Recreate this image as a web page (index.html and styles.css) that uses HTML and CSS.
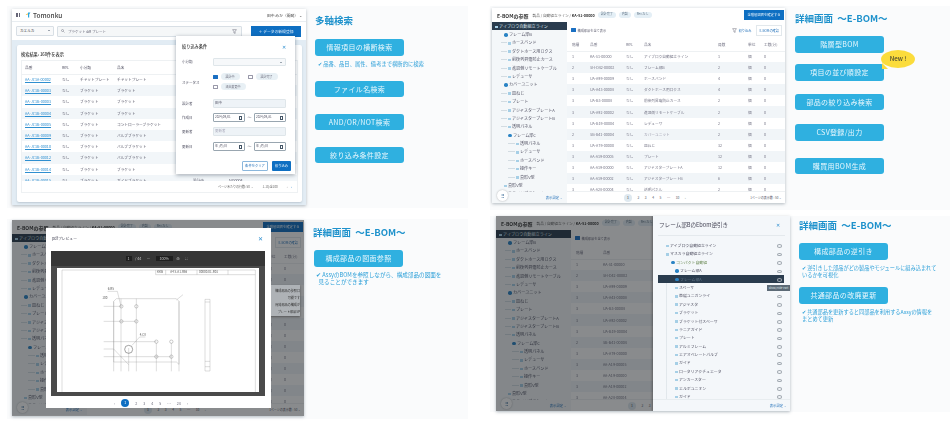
FILE: index.html
```html
<!DOCTYPE html>
<html lang="ja">
<head>
<meta charset="utf-8">
<title>Tomonku</title>
<link rel="stylesheet" href="styles.css">
</head>
<body>
<div class="column col-left">
  <section class="slide s1">
    <div class="shot">
      <header class="app-head">
        <span class="menu-dots"></span>
        <svg class="logo" viewBox="0 0 10 10"><path d="M1 4l4-2-1 3z" fill="#f0b429"/><path d="M5 1h4L7 4v5H5z" fill="#2aa7df"/></svg>
        <span class="brand">Tomonku</span>
        <span class="user">田中 みか（開発） ⌄</span>
      </header>
      <div class="toolbar">
        <span class="select">カエルカ<i class="caret"></i></span>
        <span class="search"><svg class="mag" viewBox="0 0 8 8"><circle cx="3" cy="3" r="2" fill="none" stroke="#667" stroke-width=".9"/><path d="M4.6 4.6L7 7" stroke="#667" stroke-width=".9"/></svg>プラケット ΦR プレート<svg class="funnel" viewBox="0 0 8 8"><path d="M1 1h6L5 4v3l-2-.8V4z" fill="none" stroke="#556" stroke-width=".7"/></svg></span>
        <span class="new-btn">＋ データの新規登録</span>
      </div>
      <div class="stage">
        <div class="card">
          <h2 class="result">検索結果: 160件を表示</h2>
          <div class="list-box">
            <div class="list-clip">
              <table class="list">
                <tr class="lh"><th class="l1">品番</th><th class="l2">Rev.</th><th class="l3">小分類</th><th class="l4">品名</th><th class="l5">ステータス</th><th>設計番号</th></tr>
                <tr><td class="lnk">AA-JC1A-00002</td><td>なし</td><td>チャットプレート</td><td>チャットプレート</td><td>設計中</td><td>NO0001</td></tr>
                <tr><td class="lnk">AA-JC1B-00003</td><td>なし</td><td>ブラケット</td><td>ブラケット</td><td>設計中</td><td>NO0001</td></tr>
                <tr><td class="lnk">AA-JC1B-00003</td><td>なし</td><td>ブラケット</td><td>ブラケット</td><td>設計中</td><td>NO0002</td></tr>
                <tr><td class="lnk">AA-JC1B-00004</td><td>なし</td><td>ブラケット</td><td>ブラケット</td><td>設計中</td><td>NO0002</td></tr>
                <tr><td class="lnk">AA-JC1B-00005</td><td>なし</td><td>ブラケット</td><td>コントローラーブラケット</td><td>設計中</td><td>NO0003</td></tr>
                <tr><td class="lnk">AA-JC1B-00009</td><td>なし</td><td>ブラケット</td><td>バルブブラケット</td><td>設計中</td><td>NO0003</td></tr>
                <tr><td class="lnk">AA-JC1B-00010</td><td>なし</td><td>ブラケット</td><td>バルブブラケット</td><td>設計中</td><td>NO0003</td></tr>
                <tr><td class="lnk">AA-JC1B-00012</td><td>なし</td><td>ブラケット</td><td>バルブブラケット</td><td>設計中</td><td>NO0004</td></tr>
                <tr><td class="lnk">AA-JC1B-00014</td><td>なし</td><td>ブラケット</td><td>ブラケット</td><td>設計中</td><td>NO0004</td></tr>
                <tr><td class="lnk">AA-JC1B-00015</td><td>なし</td><td>ブラケット</td><td>ガイドブラケット</td><td>設計中</td><td>NO0004</td></tr>
              </table>
            </div>
            <div class="list-foot"><span>ページあたりの行数: 50 ⌄</span><span class="range">1-10/全100</span><span class="pager">‹ &nbsp;&nbsp;&nbsp; <b>›</b></span></div>
          </div>
        </div>
      </div>
      <div class="filter-modal">
        <div class="fm-head"><b>絞り込み条件</b><span class="close">✕</span></div>
        <div class="fm-row r-sel"><label>小分類</label><span class="field sel"><i class="caret"></i></span></div>
        <div class="fm-row r-status"><label>ステータス</label>
          <div class="checks">
            <span class="chk on"></span><span class="chip">設計中</span><span class="chk"></span><span class="chip">設計完了</span>
            <span class="chk"></span><span class="chip">流出変更中</span>
          </div>
        </div>
        <div class="fm-row"><label>設計者</label><span class="field tint">田中</span></div>
        <div class="fm-row"><label>作成日</label><span class="date">2024/09/01<i></i></span><span class="tilde">〜</span><span class="date">2024/09/31<i></i></span></div>
        <div class="fm-row"><label>更新者</label><span class="field tint ph">更新者</span></div>
        <div class="fm-row"><label>更新日</label><span class="date">年 /月/日<i></i></span><span class="tilde">〜</span><span class="date">年 /月/日<i></i></span></div>
        <div class="fm-foot"><span class="btn-clear">条件をクリア</span><span class="btn-go">絞り込み</span></div>
      </div>
    </div>
    <aside class="side side1">
      <h1>多軸検索</h1>
      <div class="pill">情報項目の横断検索</div>
      <p class="note">✔ 品番、品目、属性、備考まで横断的に検索</p>
      <div class="pill after-note">ファイル名検索</div>
      <div class="pill gap17">AND/OR/NOT検索</div>
      <div class="pill gap17">絞り込み条件設定</div>
    </aside>
  </section>

  <section class="slide s3">
    <div class="shot">
      <header class="bom-head">
        <b>E-BOMの参照</b><span class="crumb">製品 / 自動組立ライン / <b>KA-S1-00000</b></span>
        <span class="tag">設計完了</span><span class="tag">内製</span><span class="tag">Rev.なし</span>
        <span class="finish">全階層図面を確定する</span>
      </header>
      <div class="bom-body">
        <nav class="tree">
          <div class="t root">アイブロウ自動組立ライン</div>
          <div class="t i1 a">フレーム部B</div><div class="t i2">ホースバンド</div><div class="t i2">ダクトホース用ロクス</div><div class="t i2">前後列昇電防止カース</div><div class="t i2">進退側リモートケーブル</div><div class="t i2">レデューサ</div>
          <div class="t i1 a">カバーユニット</div><div class="t i2">皿ねじ</div><div class="t i2">プレート</div><div class="t i2">アジャスタープレートA</div><div class="t i2">アジャスタープレートB</div><div class="t i2">透明パネル</div>
          <div class="t i2 a">フレーム部C</div><div class="t i3">透明パネル</div><div class="t i3">レデューサ</div><div class="t i3">ホースバンド</div><div class="t i3">操作キー</div><div class="t i3">真形V型</div><div class="t i1">真形V型</div><div class="t i1">スライドブラケット</div>
          <div class="tree-foot"><span class="fab">⠿</span><span>表示設定 ⌄</span></div>
        </nav>
        <main class="bom-main">
          <div class="bom-tools"><span class="chk on"></span><span class="tool-label">構成部品を全て表示</span><span class="spring"></span><svg class="funnel2" viewBox="0 0 8 8"><path d="M1 1h6L5 4v3l-2-.8V4z" fill="none" stroke="#556" stroke-width=".7"/></svg><span class="link">絞り込み</span><span class="out-btn">E-BOMの確認</span></div>
          <table class="bom">
            <tr class="lh"><th class="c1">階層</th><th class="c2">品番</th><th class="c3">Rev.</th><th class="c4">品名</th><th class="c5">員数</th><th class="c6">単位</th><th>工数(分)</th></tr>
            <tr><td>1</td><td>KA-S1-00000</td><td>なし</td><td>アイブロウ自動組立ライン</td><td>1</td><td>個</td><td>0</td></tr>
            <tr><td>2</td><td>SH-D42-00002</td><td>なし</td><td>フレーム部B</td><td>2</td><td>個</td><td>0</td></tr>
            <tr><td>3</td><td>UA-A99-00009</td><td>なし</td><td>ホースバンド</td><td>4</td><td>個</td><td>0</td></tr>
            <tr><td>3</td><td>UA-A43-00008</td><td>なし</td><td>ダクトホース用ロクス</td><td>4</td><td>個</td><td>0</td></tr>
            <tr><td>3</td><td>UA-B3-00008</td><td>なし</td><td>前後列昇電防止カース</td><td>2</td><td>個</td><td>0</td></tr>
            <tr><td>3</td><td>UA-A92-00002</td><td>なし</td><td>進退側リモートケーブル</td><td>2</td><td>個</td><td>0</td></tr>
            <tr><td>3</td><td>UA-B19-00004</td><td>なし</td><td>レデューサ</td><td>2</td><td>個</td><td>0</td></tr>
            <tr class="hl"><td>2</td><td>SB-B41-00004</td><td>なし</td><td>カバーユニット</td><td>2</td><td>個</td><td>0</td></tr>
            <tr><td>3</td><td>UA-A79-00000</td><td>なし</td><td>皿ねじ</td><td>32</td><td>個</td><td>0</td></tr>
            <tr><td>3</td><td>AA-A19-00005</td><td>なし</td><td>プレート</td><td>12</td><td>個</td><td>0</td></tr>
            <tr><td>3</td><td>AA-A19-00000</td><td>なし</td><td>アジャスタープレートA</td><td>12</td><td>個</td><td>0</td></tr>
            <tr><td>3</td><td>AA-A19-00002</td><td>なし</td><td>アジャスタープレートB</td><td>6</td><td>個</td><td>0</td></tr>
            <tr><td>3</td><td>AA-A28-00004</td><td>なし</td><td>透明パネル</td><td>2</td><td>個</td><td>0</td></tr>
          </table>
          <div class="bom-foot"><span class="pages"><b>1</b><span>2</span><span>3</span><span>4</span><span>5</span><span>…</span><span>10</span><span>›</span></span><span class="per">1ページの表示数 : 50 ⌄</span></div>
        </main>
      </div>
      <div class="dim"></div>
      <div class="pop-menu"><span>構成部品の参照ロ</span><span>可能です</span><span>開発部品の構成が</span><span>プレート部品SP</span></div>
      <div class="pdf-modal">
        <div class="pm-head"><span>pdfプレビュー</span><span class="close">✕</span></div>
        <div class="viewer">
          <div class="v-bar"><span class="v-num">1</span><span>/ 44</span><span class="v-sep">—</span><span class="v-num wide">100%</span><span>⊕</span><span class="v-sep">⛶</span></div>
          <div class="v-page">
            <svg class="drawing" viewBox="0 0 606 372" preserveAspectRatio="none">
              <g fill="none" stroke="#8a8a8a" stroke-width=".9">
                <path d="M15 6V372M595 6V372M15 6H595"/>
                <path d="M296 6V20H595M326 6V20M420 6V20M513 6V20"/>
                <path d="M178 92H358L366 100V289L358 282H170V100ZM170 100V310M192 92V310M215 240V310M238 92V310M298 225V310M343 225V310M366 100V310"/>
                <path d="M140 115H193M140 160H238M140 221H298M140 266H343M140 243H170M170 243L215 290"/>
                <path d="M181 70L192 115M152 70H181M358 96L378 80M225 232L248 207H265"/>
                <path d="M444 94H459V309H444ZM444 102H459M444 280H459M444 296H459"/>
              </g>
              <g fill="none" stroke="#666" stroke-width="1">
                <circle cx="193" cy="115" r="5"/><circle cx="238" cy="115" r="5"/><circle cx="193" cy="160" r="5"/><circle cx="238" cy="160" r="5"/>
                <circle cx="298" cy="221" r="5"/><circle cx="343" cy="221" r="5"/><circle cx="298" cy="266" r="5"/><circle cx="343" cy="266" r="5"/>
                <circle cx="215" cy="244" r="12" stroke-width="1.8"/>
              </g>
              <g class="dim-labels">
                <text x="152" y="67">6-R5</text><text x="248" y="204">4-C8</text><text x="136" y="92">100</text>
                <text x="300" y="16">KKB</text><text x="340" y="16">A4 S-A1-R56</text><text x="426" y="16">00000-01-R01</text>
              </g>
            </svg>
          </div>
        </div>
        <div class="pm-pages"><span>‹</span><b>1</b><span>2</span><span>3</span><span>4</span><span>5</span><span>…</span><span>24</span><span>›</span></div>
      </div>
    </div>
    <aside class="side side3">
      <h1>詳細画面  ～E-BOM～</h1>
      <div class="pill">構成部品の図面参照</div>
      <p class="note big">✔ AssyのBOMを参照しながら、構成部品の図面を<br>&nbsp;&nbsp;見ることができます</p>
    </aside>
  </section>
</div>

<div class="column col-right">
  <section class="slide s2">
    <div class="shot">
      <header class="bom-head">
        <b>E-BOMの参照</b><span class="crumb">製品 / 自動組立ライン / <b>KA-S1-00000</b></span>
        <span class="tag">設計完了</span><span class="tag">内製</span><span class="tag">Rev.なし</span>
        <span class="finish">全階層図面を確定する</span>
      </header>
      <div class="bom-body">
        <nav class="tree">
          <div class="t root">アイブロウ自動組立ライン</div>
          <div class="t i1 a">フレーム部B</div><div class="t i2">ホースバンド</div><div class="t i2">ダクトホース用ロクス</div><div class="t i2">前後列昇電防止カース</div><div class="t i2">進退側リモートケーブル</div><div class="t i2">レデューサ</div>
          <div class="t i1 a">カバーユニット</div><div class="t i2">皿ねじ</div><div class="t i2">プレート</div><div class="t i2">アジャスタープレートA</div><div class="t i2">アジャスタープレートB</div><div class="t i2">透明パネル</div>
          <div class="t i2 a">フレーム部C</div><div class="t i3">透明パネル</div><div class="t i3">レデューサ</div><div class="t i3">ホースバンド</div><div class="t i3">操作キー</div><div class="t i3">真形V型</div><div class="t i1">真形V型</div><div class="t i1">スライドブラケット</div>
          <div class="tree-foot"><span class="fab">⠿</span><span>表示設定 ⌄</span></div>
        </nav>
        <main class="bom-main">
          <div class="bom-tools"><span class="chk on"></span><span class="tool-label">構成部品を全て表示</span><span class="spring"></span><svg class="funnel2" viewBox="0 0 8 8"><path d="M1 1h6L5 4v3l-2-.8V4z" fill="none" stroke="#556" stroke-width=".7"/></svg><span class="link">絞り込み</span><span class="out-btn">E-BOMの確認</span></div>
          <table class="bom">
            <tr class="lh"><th class="c1">階層</th><th class="c2">品番</th><th class="c3">Rev.</th><th class="c4">品名</th><th class="c5">員数</th><th class="c6">単位</th><th>工数(分)</th></tr>
            <tr><td>1</td><td>KA-S1-00000</td><td>なし</td><td>アイブロウ自動組立ライン</td><td>1</td><td>個</td><td>0</td></tr>
            <tr><td>2</td><td>SH-D42-00002</td><td>なし</td><td>フレーム部B</td><td>2</td><td>個</td><td>0</td></tr>
            <tr><td>3</td><td>UA-A99-00009</td><td>なし</td><td>ホースバンド</td><td>4</td><td>個</td><td>0</td></tr>
            <tr><td>3</td><td>UA-A43-00008</td><td>なし</td><td>ダクトホース用ロクス</td><td>4</td><td>個</td><td>0</td></tr>
            <tr><td>3</td><td>UA-B3-00008</td><td>なし</td><td>前後列昇電防止カース</td><td>2</td><td>個</td><td>0</td></tr>
            <tr><td>3</td><td>UA-A92-00002</td><td>なし</td><td>進退側リモートケーブル</td><td>2</td><td>個</td><td>0</td></tr>
            <tr><td>3</td><td>UA-B19-00004</td><td>なし</td><td>レデューサ</td><td>2</td><td>個</td><td>0</td></tr>
            <tr><td>2</td><td>SB-B41-00004</td><td>なし</td><td class="muted">カバーユニット</td><td>2</td><td>個</td><td>0</td></tr>
            <tr><td>3</td><td>UA-A79-00000</td><td>なし</td><td>皿ねじ</td><td>32</td><td>個</td><td>0</td></tr>
            <tr><td>3</td><td>AA-A19-00005</td><td>なし</td><td>プレート</td><td>12</td><td>個</td><td>0</td></tr>
            <tr><td>3</td><td>AA-A19-00000</td><td>なし</td><td>アジャスタープレートA</td><td>12</td><td>個</td><td>0</td></tr>
            <tr><td>3</td><td>AA-A19-00002</td><td>なし</td><td>アジャスタープレートB</td><td>6</td><td>個</td><td>0</td></tr>
            <tr><td>3</td><td>AA-A28-00004</td><td>なし</td><td>透明パネル</td><td>2</td><td>個</td><td>0</td></tr>
          </table>
          <div class="bom-foot"><span class="pages"><b>1</b><span>2</span><span>3</span><span>4</span><span>5</span><span>…</span><span>10</span><span>›</span></span><span class="per">1ページの表示数 : 50 ⌄</span></div>
        </main>
      </div>
    </div>
    <aside class="side side2">
      <h1>詳細画面  ～E-BOM～</h1>
      <div class="pill">階層型BOM</div>
      <div class="pill">項目の並び順設定</div>
      <div class="pill">部品の絞り込み検索</div>
      <div class="pill">CSV登録/出力</div>
      <div class="pill">購買用BOM生成</div>
      <span class="new-badge">New !</span>
    </aside>
  </section>

  <section class="slide s4">
    <div class="shot">
      <header class="bom-head">
        <b>E-BOMの参照</b><span class="crumb">製品 / 自動組立ライン / <b>KA-S1-00000</b></span>
        <span class="tag">設計完了</span><span class="tag">内製</span><span class="tag">Rev.なし</span>
        <span class="finish">全階層図面を確定する</span>
      </header>
      <div class="bom-body">
        <nav class="tree">
          <div class="t root">アイブロウ自動組立ライン</div>
          <div class="t i1 a">フレーム部B</div><div class="t i2">ホースバンド</div><div class="t i2">ダクトホース用ロクス</div><div class="t i2">前後列昇電防止カース</div><div class="t i2">進退側リモートケーブル</div><div class="t i2">レデューサ</div>
          <div class="t i1 a">カバーユニット</div><div class="t i2">皿ねじ</div><div class="t i2">プレート</div><div class="t i2">アジャスタープレートA</div><div class="t i2">アジャスタープレートB</div><div class="t i2">透明パネル</div>
          <div class="t i2 a">フレーム部C</div><div class="t i3">透明パネル</div><div class="t i3">レデューサ</div><div class="t i3">ホースバンド</div><div class="t i3">操作キー</div><div class="t i3">真形V型</div><div class="t i1">真形V型</div><div class="t i1">スライドブラケット</div>
          <div class="tree-foot"><span class="fab">⠿</span><span>表示設定 ⌄</span></div>
        </nav>
        <main class="bom-main">
          <div class="bom-tools"><span class="chk on"></span><span class="tool-label">構成部品を全て表示</span></div>
          <table class="bom">
            <tr class="lh"><th class="c1">階層</th><th class="c2">品番</th><th class="c3">Rev.</th><th class="c4">品名</th></tr>
            <tr><td>1</td><td>KA-S1-00000</td><td>なし</td><td>アイブロウ</td></tr>
            <tr><td>2</td><td>SH-D42-00002</td><td>なし</td><td>フレーム</td></tr>
            <tr><td>3</td><td>UA-A99-00009</td><td>なし</td><td>ホース</td></tr>
            <tr><td>3</td><td>UA-A43-00008</td><td>なし</td><td>ダクト</td></tr>
            <tr><td>3</td><td>UA-B3-00008</td><td>なし</td><td>前後列</td></tr>
            <tr><td>3</td><td>UA-A92-00002</td><td>なし</td><td>進退側</td></tr>
            <tr><td>3</td><td>UA-B19-00004</td><td>なし</td><td>レデュ</td></tr>
            <tr class="hl"><td>2</td><td>SB-B41-00004</td><td>なし</td><td>カバー</td></tr>
            <tr><td>3</td><td>UA-A79-00000</td><td>なし</td><td>皿ねじ</td></tr>
            <tr><td>3</td><td>AA-A19-00005</td><td>なし</td><td>プレート</td></tr>
            <tr><td>3</td><td>AA-A19-00000</td><td>なし</td><td>アジャ</td></tr>
            <tr><td>3</td><td>AA-A19-00002</td><td>なし</td><td>アジャ</td></tr>
            <tr><td>3</td><td>AA-A28-00004</td><td>なし</td><td>透明</td></tr>
          </table>
          <div class="bom-foot"><span class="pages"><b>1</b><span>2</span><span>3</span></span></div>
        </main>
      </div>
      <div class="dim"></div>
      <div class="drawer">
        <div class="dr-head"><span>フレーム部BのEbom逆引き</span><span class="close">✕</span></div>
        <div class="dr-list">
          <div class="d d0">アイブロウ自動組立ライン</div>
          <div class="d d0">マスカラ自動組立ライン</div>
          <div class="d d1 a">コンパクト自動組</div>
          <div class="d d2 a">フレーム部A</div>
          <div class="d d2 sel-row a">フレーム部A</div>
          <div class="d d3">スペーサ</div>
          <div class="d d3">帯磁ユニガンライ</div>
          <div class="d d3">アジャスタ</div>
          <div class="d d3">ブラケット</div>
          <div class="d d3">ブラケット付スペーサ</div>
          <div class="d d3">ラニアガイド</div>
          <div class="d d3">プレート</div>
          <div class="d d3">アルミフレーム</div>
          <div class="d d3">エアオペレートバルブ</div>
          <div class="d d3">ガイド</div>
          <div class="d d3">ロータリアクチュエータ</div>
          <div class="d d3">アンカースター</div>
          <div class="d d3">エルボユニオン</div>
          <div class="d d3">ガイド</div>
        </div>
        <div class="dr-foot">表示設定 ⌄</div>
        <span class="tip">Show/Hide Part</span>
      </div>
    </div>
    <aside class="side side4">
      <h1>詳細画面  ～E-BOM～</h1>
      <div class="pill">構成部品の逆引き</div>
      <p class="note mid">✔ 逆引きした部品がどの製品やモジュールに組み込まれて<br>いるかを可視化</p>
      <div class="pill p2">共通部品の改廃更新</div>
      <p class="note mid">✔ 共通部品を更新すると同部品を利用するAssyの情報を<br>まとめて更新</p>
    </aside>
  </section>
</div>
</body>
</html>
```

FILE: styles.css
```css
* { box-sizing: border-box; }
html, body { margin: 0; }
body {
  width: 950px; height: 432px; overflow: hidden; background: #fff;
  display: flex; gap: 22px; padding: 6px 0 0 7px;
  font-family: "Noto Sans CJK JP", "Noto Sans", sans-serif; color: #333;
}
.column { display: flex; flex-direction: column; }
.col-left { width: 461px; gap: 11px; }
.col-right { width: 460px; gap: 6px; }
.slide { display: flex; background: #fafbfc; position: relative; }
.s1 { height: 202px; padding: 3px 0 0 5px; }
.s3 { height: 200px; padding: 1px 0 0 5px; }
.s2 { height: 204px; padding: 2px 0 0 2px; }
.s4 { height: 196px; padding: 0 0 0 6px; }
.shot { position: relative; flex: none; width: 294px; height: 196px; background: #fff; overflow: hidden; filter: blur(.45px); box-shadow: 0 1px 3px rgba(40,60,80,.35); }
.s2 .shot { width: 293px; height: 195px; }
.s3 .shot { width: 292px; }
.s4 .shot { height: 195px; }

/* side text */
.side { position: relative; flex: none; display: flex; flex-direction: column; align-items: flex-start; margin-left: 9px; filter: blur(.3px); }
.side h1 { margin: 0; font-size: 9.5px; line-height: 12px; font-weight: 700; color: #1f92cc; white-space: pre; }
.pill { width: 89px; height: 16.5px; border-radius: 3px; background: #2fb0e0; color: #e8f7fd; font-size: 7px; line-height: 16.5px; text-align: center; letter-spacing: .35px; }
.note { margin: 5px 0 0 3px; font-size: 5.3px; line-height: 7px; color: #2b9fd8; white-space: nowrap; }
.side1 { padding-top: 5px; }
.side1 .pill:first-of-type { margin-top: 13px; }
.side1 .after-note { margin-top: 13px; }
.side1 .gap17 { margin-top: 16.5px; }
.side2 { margin-left: 10px; padding-top: 4px; }
.side2 .pill:nth-of-type(1) { margin-top: 12px; }
.side2 .pill:nth-of-type(2) { margin-top: 11.5px; }
.side2 .pill:nth-of-type(3) { margin-top: 13px; }
.side2 .pill:nth-of-type(4) { margin-top: 14px; }
.side2 .pill:nth-of-type(5) { margin-top: 17px; }
.new-badge { position: absolute; left: 86px; top: 42px; width: 34px; height: 18px; border-radius: 50%; background: #fbdc3c; color: #4a4a30; font-size: 6.2px; font-weight: 500; line-height: 18px; text-align: center; }
.new-badge::after { content: ""; position: absolute; left: 1px; bottom: -1px; border: 3px solid transparent; border-left-color: #fbdc3c; border-bottom-color: #fbdc3c; }
.side3 { padding-top: 6px; }
.side3 .pill { margin-top: 12px; margin-left: 1px; }
.note.big { font-size: 5.6px; line-height: 7px; margin-top: 5px; margin-left: 3px; }
.side4 { margin-left: 9px; padding-top: 3px; }
.side4 .pill:first-of-type { margin-top: 12px; }
.note.mid { font-size: 5.2px; line-height: 7px; margin: 4px 0 0 3px; }
.side4 .p2 { margin-top: 9.5px; }

/* slide 1 app */
.app-head { height: 13px; display: flex; align-items: center; padding: 0 4px; border-bottom: 1px solid #e8edf1; }
.menu-dots { width: 4px; height: 4px; margin-right: 5px; background: repeating-linear-gradient(90deg, #667 0 1px, transparent 1px 1.5px); }
.logo { width: 6px; height: 6px; margin-right: 2px; }
.brand { font-size: 6.5px; font-weight: 500; color: #444; }
.user { margin-left: auto; font-size: 3.8px; color: #444; }
.toolbar { height: 18px; display: flex; align-items: center; padding: 0 0 0 4px; gap: 3px; }
.select { width: 38px; height: 10px; border: 1px solid #d8dfe5; border-radius: 1px; background: #f8f9fa; font-size: 3.6px; line-height: 8px; padding-left: 3px; position: relative; }
.caret { position: absolute; right: 3px; top: 3px; border: 1.5px solid transparent; border-top-color: #456; }
.search { width: 185px; height: 11px; border: 1px solid #d8dfe5; border-radius: 1px; background: #f5f7f8; font-size: 3.5px; color: #667; display: flex; align-items: center; padding: 0 3px; }
.mag { width: 4px; height: 4px; margin-right: 3px; }
.funnel { width: 5px; height: 5px; margin-left: auto; margin-right: 1px; }
.new-btn { margin-left: 6px; width: 50px; height: 11px; background: #0e6fc2; color: #e8f3fc; font-size: 3.8px; line-height: 11px; text-align: center; }
.stage { height: 165px; background: #e2ecf4; padding: 5px 4px 3px 5px; }
.card { height: 157px; background: #fff; border-radius: 2px; padding: 4px 4px 0 4px; box-shadow: 0 1px 2px rgba(40,60,80,.2); }
.result { margin: 0; font-size: 4.2px; line-height: 11px; font-weight: 500; color: #333; }
.list-box { height: 133px; border: 1px solid #eef1f3; }
.list-clip { height: 120px; overflow: hidden; }
table { border-collapse: collapse; table-layout: fixed; }
.list { width: 276px; font-size: 3.7px; color: #556; }
.list th, .list td { text-align: left; font-weight: 400; padding: 0 0 0 3px; white-space: nowrap; overflow: hidden; height: 11.2px; }
.list tr:nth-child(odd):not(.lh) { background: #f2f6f9; }
.list .lh th { height: 13px; border-bottom: 1px solid #eef1f3; }
.l1 { width: 37px; } .l2 { width: 18px; } .l3 { width: 37px; } .l4 { width: 76px; } .l5 { width: 36px; }
.lnk { color: #2e8fd0; text-decoration: underline; }
.list-foot { height: 12px; display: flex; justify-content: flex-end; align-items: center; font-size: 3px; color: #666; padding-right: 5px; }
.range { margin-left: 9px; margin-right: 9px; }
.pager b { color: #0e6fc2; }
.filter-modal { position: absolute; left: 164px; top: 27px; width: 119px; height: 138px; background: #fff; padding: 6px 4px 0 6px; box-shadow: 0 1px 4px rgba(30,50,70,.45); }
.fm-head { display: flex; justify-content: space-between; align-items: center; height: 8px; font-size: 4.2px; color: #333; padding-right: 5px; margin-bottom: 4.5px; }
.fm-head b { font-weight: 500; }
.close { color: #2e8fd0; font-size: 5px; }
.fm-row { display: flex; align-items: center; height: 14.4px; font-size: 3.5px; color: #556; }
.fm-row label { flex: none; width: 31px; }
.r-status { height: 27px; }
.field { position: relative; width: 73px; height: 8px; border: 1px solid #dfe6ea; border-radius: 1px; line-height: 6px; padding-left: 1px; }
.tint { background: #eef3f7; height: 9px; }
.ph { color: #aab; }
.sel { background: #f6f8fa; }
.checks { display: grid; grid-template-columns: 5px auto 5px auto; gap: 3px 2.5px; align-items: center; justify-items: start; width: 60px; margin-top: -1px; }
.chk { width: 4.5px; height: 4.5px; border: .5px solid #99a; border-radius: .5px; background: #fff; display: block; }
.chk.on { background: #1a6fc2; border-color: #1a6fc2; }
.chip { font-size: 3px; background: #e8f0f5; color: #667; border-radius: 4px; padding: 1.3px 5px; line-height: 4.4px; white-space: nowrap; }
.date { position: relative; width: 32px; height: 8.5px; border: .5px solid #99a6b0; border-radius: 1px; font-size: 3px; line-height: 7.5px; padding-left: 1px; }
.date i { position: absolute; right: 2px; top: 2px; width: 3.5px; height: 3.5px; border: .7px solid #456; }
.tilde { width: 9px; text-align: center; font-size: 4px; }
.fm-foot { display: flex; justify-content: flex-end; gap: 4px; margin-top: 7.5px; }
.btn-clear { width: 26px; height: 10px; border: .7px solid #8bb7dc; border-radius: 1px; font-size: 3.3px; line-height: 8.6px; text-align: center; color: #2e78bd; }
.btn-go { width: 19px; height: 10px; background: #0e6fc2; border-radius: 1px; color: #e8f3fc; font-size: 3.3px; line-height: 10px; text-align: center; }

/* BOM */
.bom-head { height: 14px; display: flex; align-items: center; padding: 0 1px 0 5px; font-size: 3.7px; color: #666; white-space: nowrap; }
.bom-head > b { font-size: 5px; color: #333; margin-right: 4px; font-weight: 700; }
.crumb b { color: #333; }
.tag { margin-left: 3px; padding: 0 3px; background: #e4eff6; border-radius: 3px; color: #678; line-height: 5.4px; font-size: 3px; }
.tag:first-of-type { margin-left: 8px; color: #2e8fd0; }
.finish { margin-left: auto; width: 40px; height: 9.5px; background: #0e6fc2; color: #e8f3fc; font-size: 3.3px; line-height: 9.5px; text-align: center; }
.bom-body { display: flex; height: 181px; }
.tree { position: relative; flex: none; width: 75px; background: #f4f7f9; overflow: hidden; font-size: 4.1px; color: #556; }
.t { height: 8.4px; line-height: 8.4px; white-space: nowrap; padding-left: 12px; position: relative; }
.t::before { content: ""; display: inline-block; width: 2.5px; height: 2.5px; background: #a6cfe6; margin-right: 1.5px; vertical-align: middle; }
.t.a::before { width: 3.5px; height: 3.5px; border-radius: 50%; background: #2a83c4; }
.root { height: 8px; line-height: 8px; padding-left: 3px; background: #2a3c4e; color: #dfe7ed; }
.i1 { padding-left: 12px; } .i2 { padding-left: 16px; } .i3 { padding-left: 24px; }
.t.i2:not(.a)::after { content: ""; position: absolute; left: 9px; top: 4px; width: 6px; border-top: .4px solid #d3dce2; }
.t.i3::after { content: ""; position: absolute; left: 16px; top: 4px; width: 7px; border-top: .4px solid #d3dce2; }
.tree-foot { position: absolute; left: 0; right: 0; bottom: 0; height: 11px; background: #f4f7f9; display: flex; justify-content: space-between; align-items: center; padding: 0 4px 0 5px; color: #2e78bd; font-size: 3.4px; }
.fab { width: 11px; height: 11px; margin-top: -4px; border-radius: 50%; background: #fff; color: #2a5f8f; font-size: 5px; line-height: 11px; text-align: center; box-shadow: 0 0 2px rgba(0,0,0,.3); }
.bom-main { flex: 1; min-width: 0; position: relative; overflow: hidden; }
.bom-tools { height: 16px; display: flex; align-items: center; padding: 0 3px 0 4px; font-size: 3.2px; color: #667; gap: 2px; }
.bom-tools .chk { width: 4.5px; height: 4.5px; }
.spring { flex: 1; }
.funnel2 { width: 5px; height: 5px; }
.link { color: #2e78bd; margin-right: 3px; }
.out-btn { border: .5px solid #e2e8ec; padding: 2px 2px; color: #2e78bd; }
.bom { width: 218px; font-size: 3.7px; color: #778; }
.bom th, .bom td { height: 11.1px; padding: 0 0 0 5px; font-weight: 400; text-align: left; white-space: nowrap; overflow: hidden; }
.bom .lh th { height: 13px; border-bottom: 1px solid #eef1f3; }
.bom tr:nth-child(odd):not(.lh) { background: #f1f5f8; }
.bom tr.hl { background: #e3eaf0; }
.c1 { width: 18px; } .c2 { width: 36px; } .c3 { width: 18px; } .c4 { width: 74px; } .c5 { width: 30px; } .c6 { width: 16px; }
.muted { color: #99a; }
.bom-foot { position: absolute; left: 0; right: 0; bottom: 0; height: 12px; background: #fff; border-top: 1px solid #eef1f3; display: flex; align-items: center; padding: 0 3px; font-size: 3.3px; color: #556; }
.pages { display: flex; align-items: center; gap: 5.5px; margin-left: 54px; }
.pages b { width: 8px; height: 8px; border-radius: 50%; background: #dfe9f0; text-align: center; line-height: 8px; font-weight: 500; }
.per { margin-left: auto; font-size: 3px; }
.dim { position: absolute; inset: 0; background: rgba(20,24,28,.5); }
.pop-menu { position: absolute; right: 4px; top: 65px; width: 30px; height: 31px; background: #aeb2b6; color: #333; font-size: 3.1px; line-height: 7px; padding: 2px 0; display: flex; flex-direction: column; align-items: flex-end; overflow: hidden; box-shadow: 0 1px 2px rgba(0,0,0,.4); white-space: nowrap; }

/* pdf modal */
.pdf-modal { position: absolute; left: 34px; top: 8px; width: 225px; height: 180px; background: #fff; padding: 0 6px 0 5px; }
.pm-head { height: 23px; display: flex; justify-content: space-between; align-items: center; font-size: 3.8px; color: #445; padding: 0 2px 2px 1px; }
.pm-head .close { font-size: 5.5px; }
.viewer { height: 145px; background: #4a4a4a; }
.v-bar { height: 15px; background: #363636; color: #c8c8c8; font-size: 3.6px; display: flex; align-items: center; justify-content: center; gap: 3.5px; }
.v-num { background: #1f1f1f; padding: 0 2px; line-height: 5px; }
.v-num.wide { padding: 0 4px; }
.v-sep { margin: 0 2px; }
.v-page { margin: 2px 6px 0; height: 124px; background: #fff; }
.drawing { display: block; width: 100%; height: 100%; }
.dim-labels text { font-size: 9px; fill: #555; }
.pm-pages { height: 12px; display: flex; justify-content: center; align-items: center; gap: 6px; font-size: 3.6px; color: #667; margin-top: 1px; padding-right: 14px; }
.pm-pages b { width: 8px; height: 8px; border-radius: 50%; background: #0e6fc2; color: #fff; font-weight: 400; text-align: center; line-height: 8px; }

/* drawer */
.drawer { position: absolute; right: 0; top: 0; bottom: 0; width: 137px; background: #f4f7fa; display: flex; flex-direction: column; box-shadow: -1px 0 2px rgba(0,0,0,.3); }
.dr-head { flex: none; height: 20px; margin: 0 5px; display: flex; justify-content: space-between; align-items: center; font-size: 5.6px; color: #445; border-bottom: 1px solid #e4e9ed; padding: 0 5px 2px 1px; }
.dr-list { flex: 1; padding: 5px 6px 0 5px; overflow: hidden; font-size: 3.9px; color: #556; }
.d { height: 8.4px; line-height: 8.4px; white-space: nowrap; position: relative; }
.d::before { content: ""; display: inline-block; width: 2.5px; height: 2.5px; background: #a6cfe6; margin-right: 1.5px; vertical-align: middle; }
.d.a::before { width: 3.5px; height: 3.5px; border-radius: 50%; background: #2a83c4; }
.d::after { content: ""; position: absolute; right: 2px; top: 3.4px; width: 3.4px; height: 1.6px; border-radius: 50%; border: .4px solid #a0a8b0; }
.d0 { padding-left: 8px; } .d1 { padding-left: 13px; color: #6b8a55; } .d2 { padding-left: 17px; } .d3 { padding-left: 17px; background: linear-gradient(#cfd8de, #cfd8de) 8px 0 / .5px 100% no-repeat; }
.sel-row { background: #2a3c4e; color: #5f7486; }
.dr-foot { flex: none; height: 12px; border-top: 1px solid #e8edf0; text-align: right; padding-right: 3px; color: #2e78bd; font-size: 3.4px; line-height: 12px; }
.tip { position: absolute; right: 0; top: 69px; width: 23px; height: 6px; background: #5c6a76; color: #dfe5ea; font-size: 2.7px; line-height: 6px; text-align: center; }
```
